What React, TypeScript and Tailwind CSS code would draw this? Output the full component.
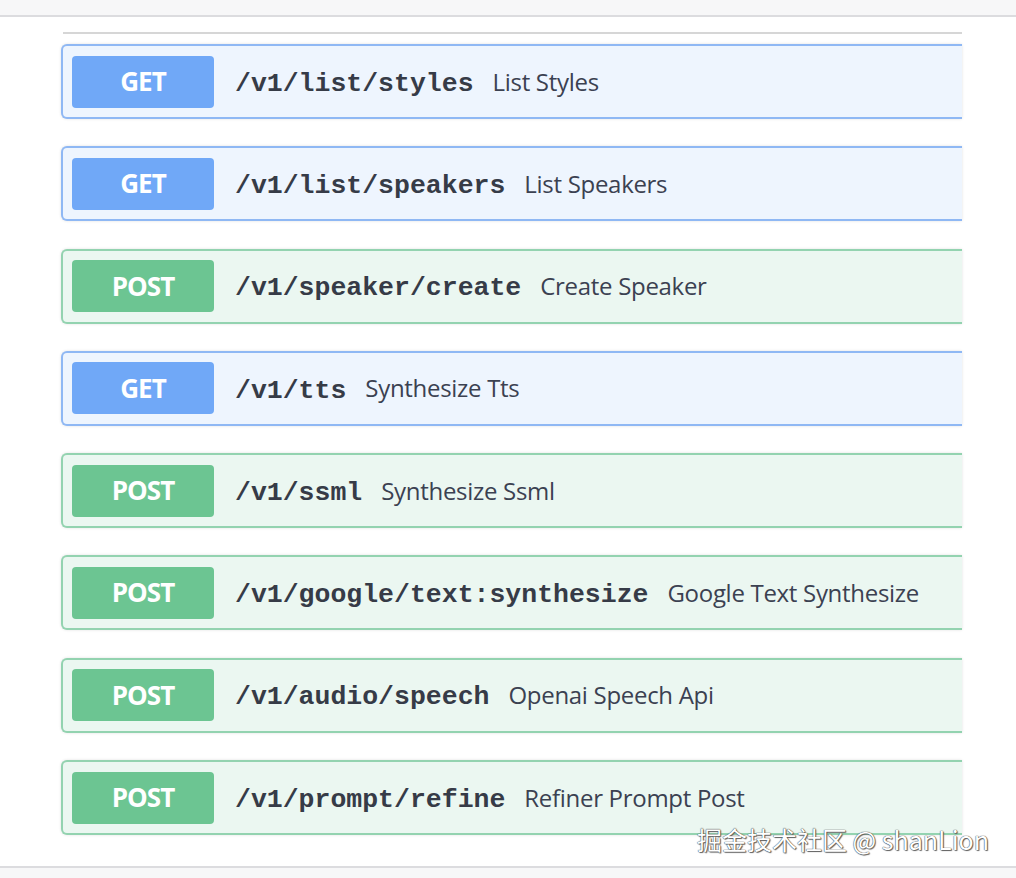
const endpoints = [
  { method: "GET", path: "/v1/list/styles", summary: "List Styles" },
  { method: "GET", path: "/v1/list/speakers", summary: "List Speakers" },
  { method: "POST", path: "/v1/speaker/create", summary: "Create Speaker" },
  { method: "GET", path: "/v1/tts", summary: "Synthesize Tts" },
  { method: "POST", path: "/v1/ssml", summary: "Synthesize Ssml" },
  { method: "POST", path: "/v1/google/text:synthesize", summary: "Google Text Synthesize" },
  { method: "POST", path: "/v1/audio/speech", summary: "Openai Speech Api" },
  { method: "POST", path: "/v1/prompt/refine", summary: "Refiner Prompt Post" },
];

export default function App() {
  return (
    <div className="relative w-[1016px] h-[878px] overflow-hidden bg-white">
      {/* top strip */}
      <div className="h-[17px] bg-[#f7f7f8] border-b-2 border-[#dcdcdf]" />

      <div className="pl-[61px] pr-[54px] pt-[15px]">
        <div className="ml-[2px] h-[2px] bg-[#d6d6d6]" />

        <div className="mt-[10px] flex flex-col gap-[27.3px]">
          {endpoints.map((ep) => {
            const isGet = ep.method === "GET";
            return (
              <div
                key={ep.path}
                className={
                  isGet
                    ? "flex h-[75px] items-center rounded-l-[6px] border-2 border-r-0 border-[#8fb8f4] bg-[#eef5fe] pl-[9px] shadow-[0_0_3px_rgba(0,0,0,0.12)]"
                    : "flex h-[75px] items-center rounded-l-[6px] border-2 border-r-0 border-[#93d3b0] bg-[#ebf7f1] pl-[9px] shadow-[0_0_3px_rgba(0,0,0,0.12)]"
                }
              >
                <div
                  className={
                    isGet
                      ? "flex h-[52px] w-[142px] items-center justify-center rounded-[4px] bg-[#70a8f7] font-['Open_Sans',sans-serif] text-[26px] font-bold tracking-[-1px] text-white"
                      : "flex h-[52px] w-[142px] items-center justify-center rounded-[4px] bg-[#6cc592] font-['Open_Sans',sans-serif] text-[26px] font-bold tracking-[-1px] text-white"
                  }
                >
                  {ep.method}
                </div>
                <span className="ml-[21px] translate-y-[3px] font-['Liberation_Mono',monospace] text-[26.5px] font-bold text-[#363b47]">
                  {ep.path}
                </span>
                <span className="ml-[19px] font-['Open_Sans',sans-serif] text-[24px] tracking-[-0.3px] text-[#3b4151]">
                  {ep.summary}
                </span>
              </div>
            );
          })}
        </div>
      </div>

      {/* bottom strip */}
      <div className="absolute bottom-0 left-0 right-0 h-[12px] border-t-2 border-[#dcdcdf] bg-[#f7f7f8]" />

      {/* watermark */}
      <div className="absolute left-[697px] top-[821px] font-['Noto_Sans_CJK_SC','Noto_Sans',sans-serif] text-[25px] leading-[36px] text-white [text-shadow:0_0_1px_#444,0_0_1px_#444,1px_1px_1px_#666]">
        掘金技术社区 @ shanLion
      </div>
    </div>
  );
}
